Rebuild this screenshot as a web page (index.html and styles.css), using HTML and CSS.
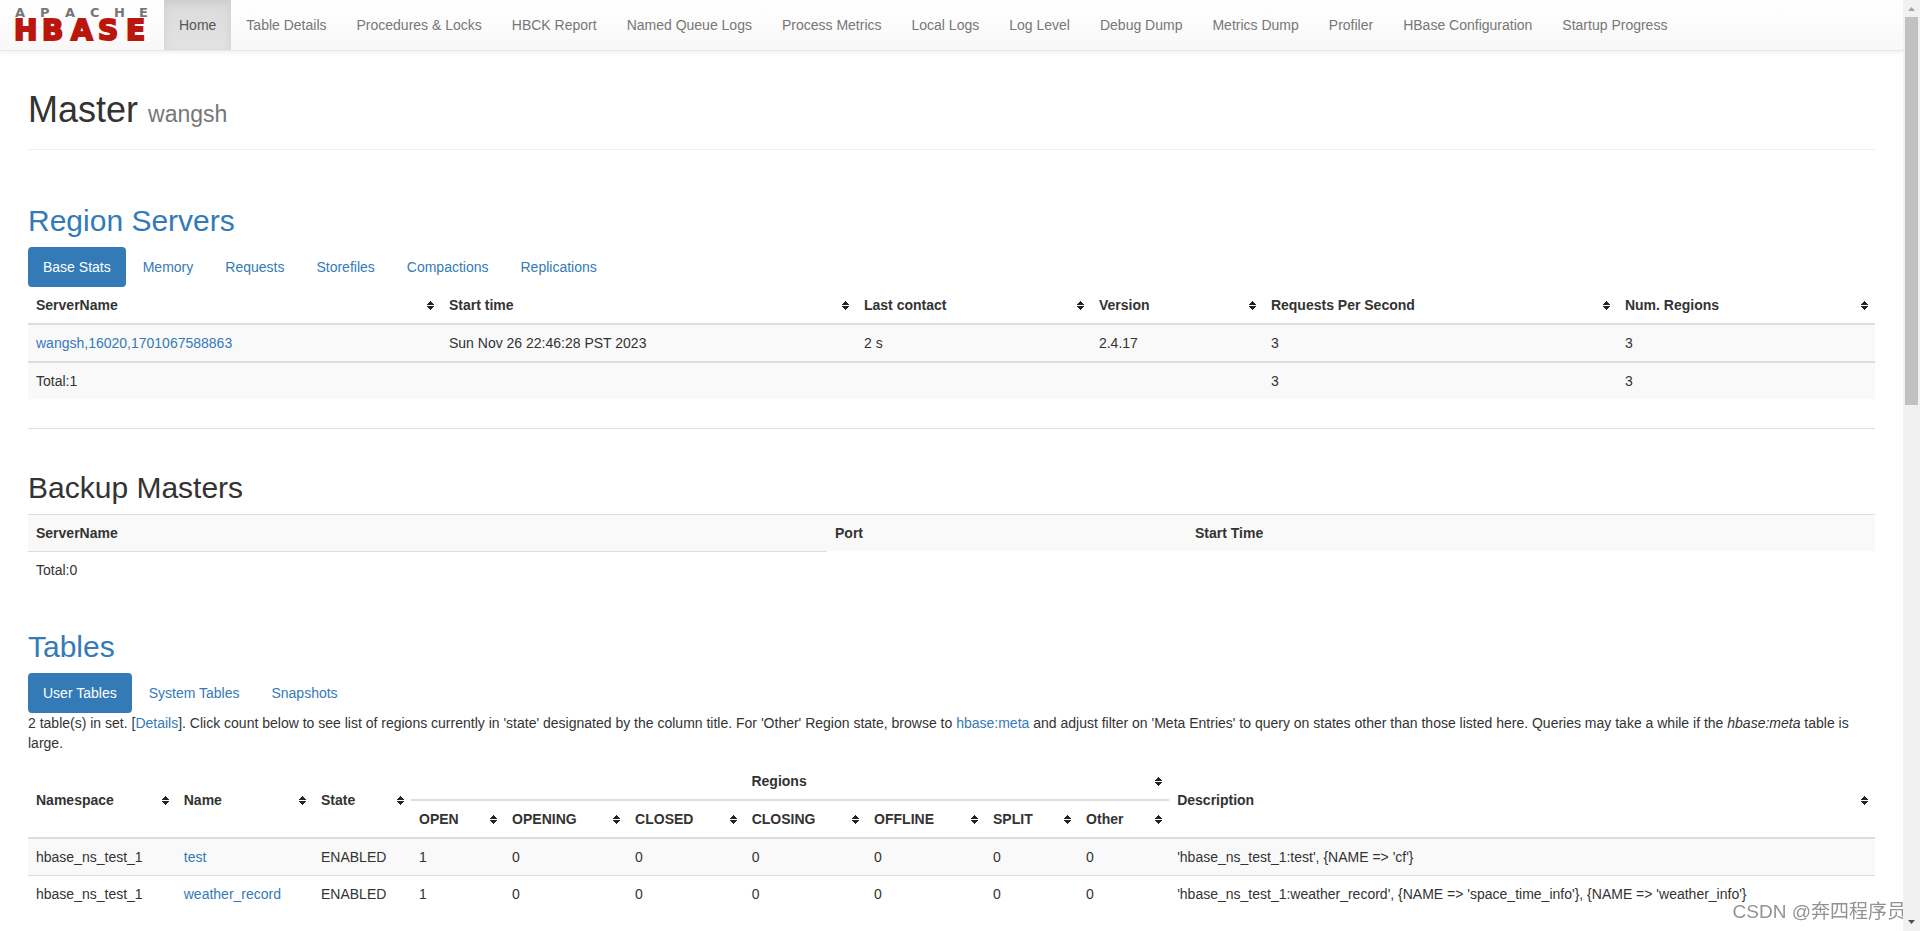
FILE: index.html
```html
<!DOCTYPE html>
<html lang="en">
<head>
<meta charset="utf-8">
<title>Master: wangsh</title>
<link rel="stylesheet" href="styles.css">
</head>
<body>
<header class="navbar">
  <a class="brand" href="#" aria-label="Apache HBase">
    <svg width="134" height="50" viewBox="0 0 134 50" role="img" aria-hidden="true">
      <text class="brand-top" x="0 25 50 75 99 124" y="17">APACHE</text>
      <text class="brand-main" x="-1 27 56 83 111" y="40">HBASE</text>
    </svg>
  </a>
  <nav>
    <ul class="nav-list">
      <li><a class="nav-link active" href="#">Home</a></li>
      <li><a class="nav-link" href="#">Table Details</a></li>
      <li><a class="nav-link" href="#">Procedures &amp; Locks</a></li>
      <li><a class="nav-link" href="#">HBCK Report</a></li>
      <li><a class="nav-link" href="#">Named Queue Logs</a></li>
      <li><a class="nav-link" href="#">Process Metrics</a></li>
      <li><a class="nav-link" href="#">Local Logs</a></li>
      <li><a class="nav-link" href="#">Log Level</a></li>
      <li><a class="nav-link" href="#">Debug Dump</a></li>
      <li><a class="nav-link" href="#">Metrics Dump</a></li>
      <li><a class="nav-link" href="#">Profiler</a></li>
      <li><a class="nav-link" href="#">HBase Configuration</a></li>
      <li><a class="nav-link" href="#">Startup Progress</a></li>
    </ul>
  </nav>
</header>

<main class="container">
  <div class="page-header">
    <h1>Master <small>wangsh</small></h1>
  </div>

  <section class="servers">
    <h2><a href="#">Region Servers</a></h2>
    <ul class="pills">
      <li><a class="pill active" href="#">Base Stats</a></li>
      <li><a class="pill" href="#">Memory</a></li>
      <li><a class="pill" href="#">Requests</a></li>
      <li><a class="pill" href="#">Storefiles</a></li>
      <li><a class="pill" href="#">Compactions</a></li>
      <li><a class="pill" href="#">Replications</a></li>
    </ul>
    <table class="table stats">
      <colgroup><col class="s-name"><col class="s-start"><col class="s-contact"><col class="s-version"><col class="s-requests"><col class="s-regions"></colgroup>
      <thead>
        <tr><th class="sort">ServerName</th><th class="sort">Start time</th><th class="sort">Last contact</th><th class="sort">Version</th><th class="sort">Requests Per Second</th><th class="sort">Num. Regions</th></tr>
      </thead>
      <tbody>
        <tr class="odd"><td><a href="#">wangsh,16020,1701067588863</a></td><td>Sun Nov 26 22:46:28 PST 2023</td><td>2 s</td><td>2.4.17</td><td>3</td><td>3</td></tr>
      </tbody>
      <tfoot>
        <tr class="odd"><td>Total:1</td><td></td><td></td><td></td><td>3</td><td>3</td></tr>
      </tfoot>
    </table>
  </section>

  <section class="backup">
    <h2>Backup Masters</h2>
    <table class="table masters">
      <colgroup><col class="m-name"><col class="m-port"><col class="m-start"></colgroup>
      <tbody>
        <tr class="odd"><th>ServerName</th><th>Port</th><th>Start Time</th></tr>
        <tr><td>Total:0</td></tr>
      </tbody>
    </table>
  </section>

  <section class="tables">
    <h2><a href="#">Tables</a></h2>
    <ul class="pills">
      <li><a class="pill active" href="#">User Tables</a></li>
      <li><a class="pill" href="#">System Tables</a></li>
      <li><a class="pill" href="#">Snapshots</a></li>
    </ul>
    <p class="note">2 table(s) in set. [<a href="#">Details</a>]. Click count below to see list of regions currently in 'state' designated by the column title. For 'Other' Region state, browse to <a href="#">hbase:meta</a> and adjust filter on 'Meta Entries' to query on states other than those listed here. Queries may take a while if the <em>hbase:meta</em> table is large.</p>
    <table class="table users">
      <colgroup><col class="u-space"><col class="u-name"><col class="u-state"><col class="u-open"><col class="u-opening"><col class="u-closed"><col class="u-closing"><col class="u-offline"><col class="u-split"><col class="u-other"><col class="u-desc"></colgroup>
      <thead>
        <tr><th class="sort" rowspan="2">Namespace</th><th class="sort" rowspan="2">Name</th><th class="sort" rowspan="2">State</th><th class="sort group" colspan="7">Regions</th><th class="sort" rowspan="2">Description</th></tr>
        <tr><th class="sort">OPEN</th><th class="sort">OPENING</th><th class="sort">CLOSED</th><th class="sort">CLOSING</th><th class="sort">OFFLINE</th><th class="sort">SPLIT</th><th class="sort">Other</th></tr>
      </thead>
      <tbody>
        <tr class="odd"><td>hbase_ns_test_1</td><td><a href="#">test</a></td><td>ENABLED</td><td>1</td><td>0</td><td>0</td><td>0</td><td>0</td><td>0</td><td>0</td><td>'hbase_ns_test_1:test', {NAME =&gt; 'cf'}</td></tr>
        <tr><td>hbase_ns_test_1</td><td><a href="#">weather_record</a></td><td>ENABLED</td><td>1</td><td>0</td><td>0</td><td>0</td><td>0</td><td>0</td><td>0</td><td>'hbase_ns_test_1:weather_record', {NAME =&gt; 'space_time_info'}, {NAME =&gt; 'weather_info'}</td></tr>
      </tbody>
    </table>
  </section>
</main>

<div class="watermark">CSDN @奔四程序员</div>
<div class="scrollbar" aria-hidden="true">
  <svg class="arrow" width="17" height="17" viewBox="0 0 17 17"><path d="M5 11 L8.500 7 L12 11 Z" fill="#a3a3a3"/></svg>
  <div class="track"><div class="thumb"></div></div>
  <svg class="arrow" width="17" height="17" viewBox="0 0 17 17"><path d="M5 6 L12 6 L8.500 10 Z" fill="#505050"/></svg>
</div>
</body>
</html>
```
FILE: styles.css
```css
* { box-sizing: border-box; }

body {
  margin: 0;
  padding-right: 17px;
  background: #fff;
  color: #333;
  font: 14px/20px "Liberation Sans", Arial, "Noto Sans CJK SC", sans-serif;
}

a { color: #337ab7; text-decoration: none; }
ul { margin: 0; padding: 0; list-style: none; }

/* Top bar */
.navbar {
  display: flex;
  border-bottom: 1px solid #e7e7e7;
  background: linear-gradient(#fff, #f8f8f8);
  box-shadow: 0 1px 5px rgba(0, 0, 0, .075);
}
.brand { display: flex; align-items: center; padding: 0 15px; }
.brand svg { overflow: visible; }
.brand-top { font: bold 13px "DejaVu Sans", sans-serif; fill: #777; }
.brand-main {
  font: bold 28px "DejaVu Sans", sans-serif;
  fill: #ba160c;
  stroke: #ba160c;
  stroke-width: 2px;
}
.nav-list { display: flex; }
.nav-link { display: block; padding: 15px; color: #777; }
.nav-link.active {
  color: #555;
  background: linear-gradient(#dbdbdb, #e2e2e2);
  box-shadow: inset 0 3px 9px rgba(0, 0, 0, .075);
}

/* Page content */
.container { padding: 39px 28px 18px; }
.page-header { padding-bottom: 19px; border-bottom: 1px solid #eee; }
h1, h2 { margin: 0; font-weight: 500; }
h1 { font-size: 36px; line-height: 40px; }
h1 small { font-size: 23px; line-height: 1; font-weight: 400; color: #777; }
h2 { margin-bottom: 10px; font-size: 30px; line-height: 33px; }
.servers { padding: 54px 0 29px; border-bottom: 1px solid #ddd; }
.backup { padding: 42px 0; }

.pills { display: flex; gap: 2px; }
.pill { display: block; padding: 10px 15px; border-radius: 4px; }
.pill.active { color: #fff; background: #337ab7; }
.note { margin: 0 0 10px; }

/* Tables */
.table {
  width: 100%;
  table-layout: fixed;
  border-collapse: separate;
  border-spacing: 0;
}
th, td { padding: 8px; text-align: left; }
td { vertical-align: top; }
.odd { background: #f9f9f9; }
.sort {
  padding-right: 30px;
  border-bottom: 2px solid #ddd;
  background: url("data:image/svg+xml,%3Csvg xmlns='http://www.w3.org/2000/svg' width='7' height='9' shape-rendering='crispEdges'%3E%3Cpath d='M3 0h1v1h1v1h1v1h1v1H0V3h1V2h1V1h1zM0 5h7v1h-1v1h-1v1h-1v1h-1V8h-1V7h-1V6h-1z' fill='%23212529'/%3E%3C/svg%3E") no-repeat right 7px center;
}
.group { text-align: center; }
.stats tfoot td { border-top: 2px solid #ddd; }
.masters th, .masters td { border-top: 1px solid #ddd; }
.users tbody tr + tr td { border-top: 1px solid #ddd; }

.s-name { width: 22.36%; }
.s-start { width: 22.47%; }
.s-contact { width: 12.72%; }
.s-version { width: 9.31%; }
.s-requests { width: 19.17%; }
.s-regions { width: 13.97%; }

.m-name { width: 43.26%; }
.m-port { width: 19.49%; }
.m-start { width: 37.25%; }

.u-space { width: 8%; }
.u-name { width: 7.43%; }
.u-state { width: 5.31%; }
.u-open { width: 5.04%; }
.u-opening { width: 6.66%; }
.u-closed { width: 6.31%; }
.u-closing { width: 6.63%; }
.u-offline { width: 6.44%; }
.u-split { width: 5.04%; }
.u-other { width: 4.93%; }
.u-desc { width: 38.21%; }

/* Overlays */
.watermark {
  position: fixed;
  right: 14px;
  bottom: 6px;
  color: rgba(110, 110, 110, .75);
  font-size: 19px;
  line-height: 26px;
  text-shadow: 1px 1px 1px #fff;
}
.scrollbar {
  position: fixed;
  top: 0;
  right: 0;
  bottom: 0;
  display: flex;
  flex-direction: column;
  width: 17px;
  background: #f1f1f1;
}
.arrow { display: block; }
.track { flex: 1; padding: 0 2px; }
.thumb { height: 43.3%; background: #c1c1c1; }
```
